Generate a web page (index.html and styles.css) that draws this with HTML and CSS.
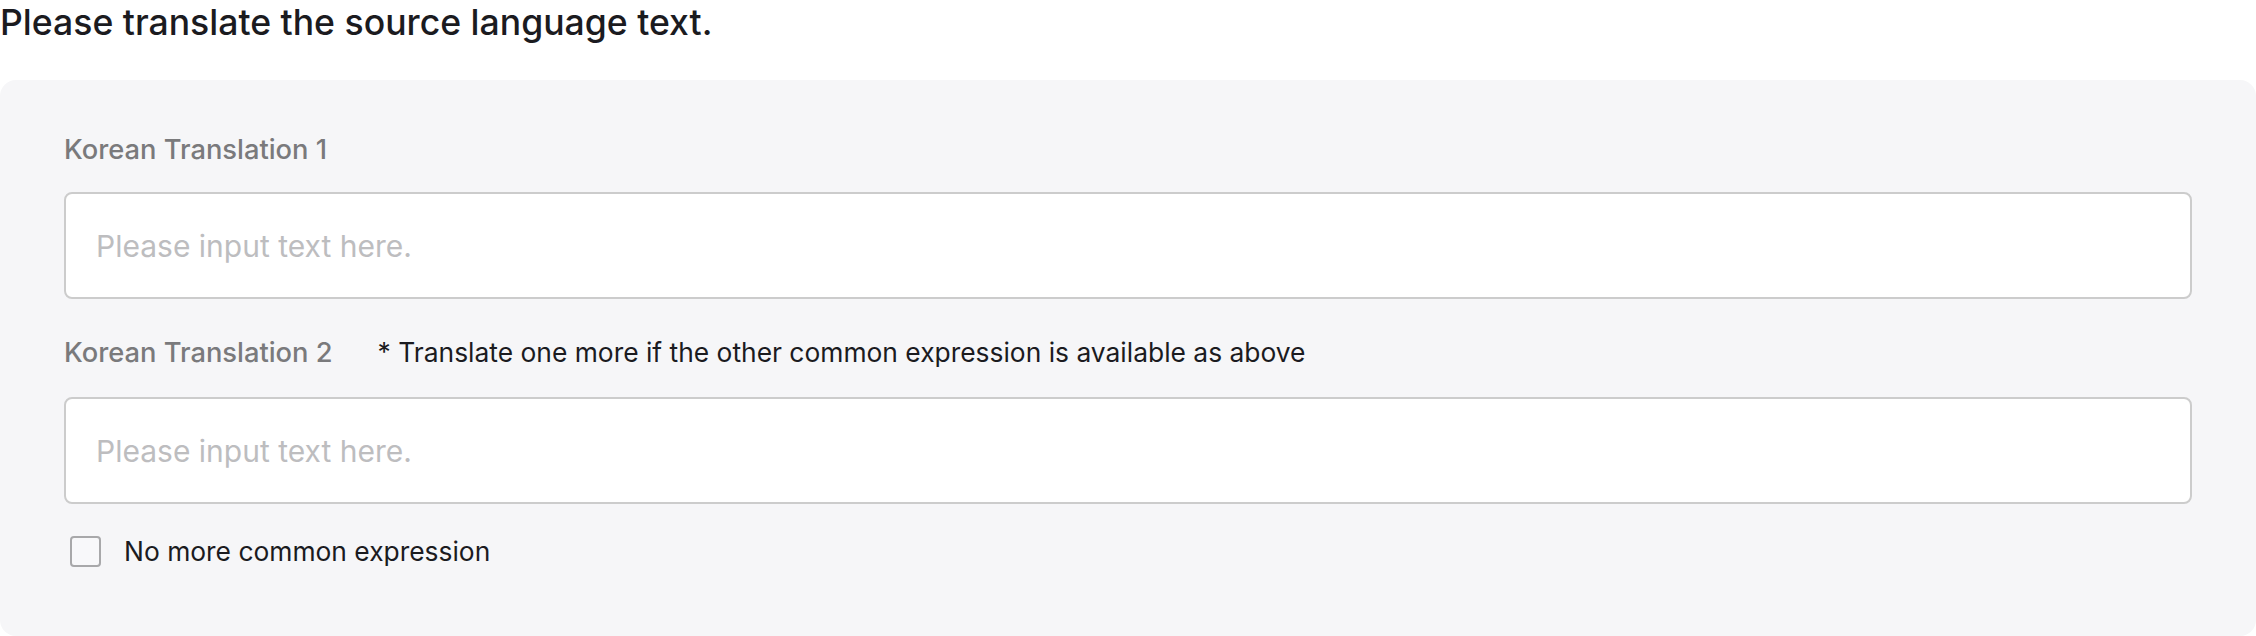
FILE: index.html
```html
<!DOCTYPE html>
<html lang="en">
<head>
<meta charset="utf-8">
<title>Translate</title>
<link rel="stylesheet" href="styles.css">
</head>
<body>
<h1 class="title">Please translate the source language text.</h1>
<section class="panel">
  <div class="label-row"><span class="label">Korean Translation 1</span></div>
  <div class="field"><span class="placeholder">Please input text here.</span></div>
  <div class="label-row second"><span class="label">Korean Translation 2</span><span class="hint">* Translate one more if the other common expression is available as above</span></div>
  <div class="field"><span class="placeholder">Please input text here.</span></div>
  <label class="check-row"><span class="box"></span><span class="check-text">No more common expression</span></label>
</section>
</body>
</html>
```
FILE: styles.css
```css
html, body {
  margin: 0;
  padding: 0;
  background: #ffffff;
}
body {
  font-family: Inter, "Noto Sans", sans-serif;
  color: #1b1b1f;
  width: 2256px;
  height: 636px;
  overflow: hidden;
}
.title {
  margin: 0;
  height: 80px;
  box-sizing: border-box;
  padding-top: 3px;
  font-size: 35.6px;
  line-height: 40px;
  font-weight: 550;
  color: #1b1b1f;
}
.panel {
  background: #f6f6f8;
  border-radius: 16px;
  padding: 49px 64px 60px;
  height: 556px;
  box-sizing: border-box;
  display: flex;
  flex-direction: column;
}
.label-row {
  height: 40px;
  display: flex;
  align-items: center;
  gap: 45px;
  margin-bottom: 23px;
}
.label-row.second {
  margin-top: 33px;
  margin-bottom: 25px;
}
.label {
  font-size: 27.3px;
  font-weight: 550;
  color: #7a7a7c;
}
.hint {
  font-size: 26.4px;
  font-weight: 400;
  color: #1b1b1f;
}
.field {
  height: 107px;
  box-sizing: border-box;
  background: #ffffff;
  border: 2px solid #cccccc;
  border-radius: 8px;
  display: flex;
  align-items: center;
  padding-left: 30px;
}
.placeholder {
  font-size: 30px;
  color: #bdbdbf;
}
.check-row {
  margin-top: 27px;
  height: 40px;
  display: flex;
  align-items: center;
  gap: 23px;
  padding-left: 6px;
}
.box {
  width: 31px;
  height: 31px;
  box-sizing: border-box;
  border: 2px solid #a8a8aa;
  border-radius: 4px;
  background: #f8f8fa;
}
.check-text {
  font-size: 26.4px;
  color: #1b1b1f;
}
```
